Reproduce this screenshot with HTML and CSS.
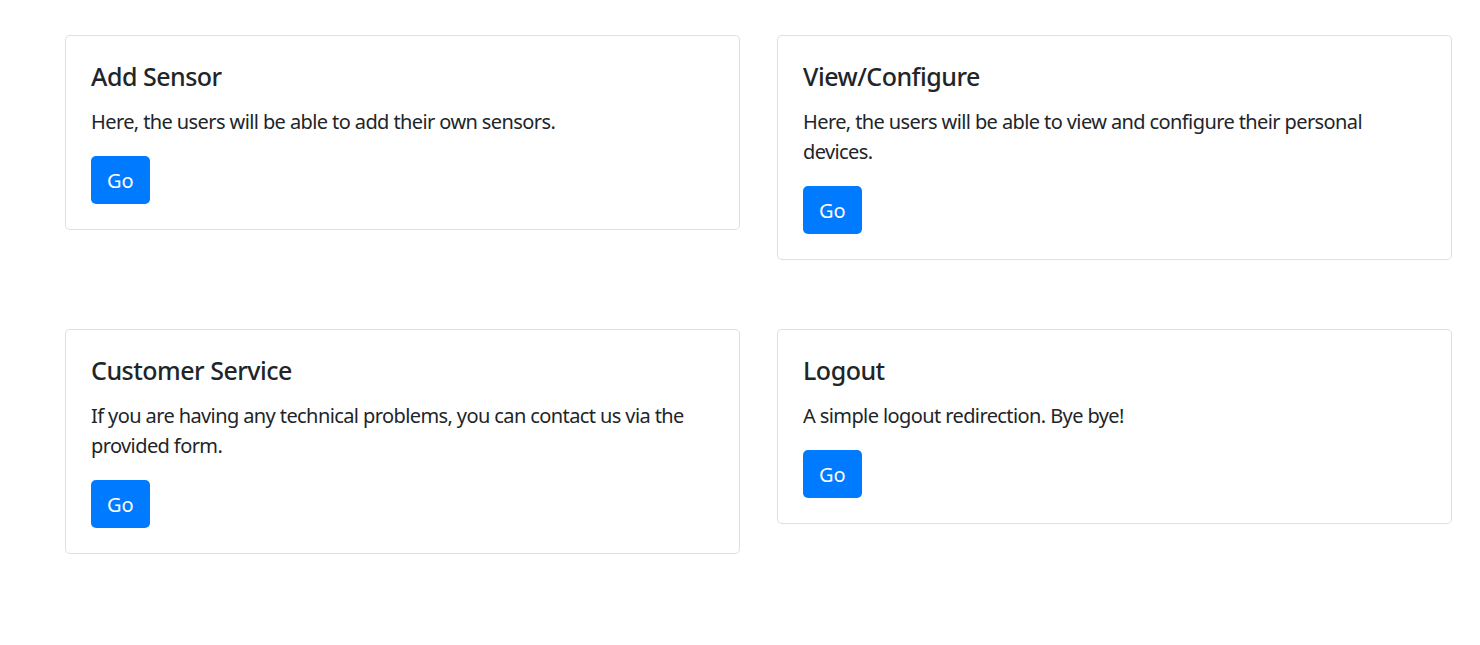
FILE: index.html
```html
<!DOCTYPE html>
<html lang="en">
<head>
<meta charset="utf-8">
<title>Dashboard</title>
<link rel="stylesheet" href="styles.css">
</head>
<body>
<main class="grid">
  <section class="card">
    <h5 class="card-title">Add Sensor</h5>
    <p class="card-text">Here, the users will be able to add their own sensors.</p>
    <a class="btn" href="#">Go</a>
  </section>
  <section class="card">
    <h5 class="card-title">View/Configure</h5>
    <p class="card-text">Here, the users will be able to view and configure their personal devices.</p>
    <a class="btn" href="#">Go</a>
  </section>
  <section class="card">
    <h5 class="card-title">Customer Service</h5>
    <p class="card-text">If you are having any technical problems, you can contact us via the provided form.</p>
    <a class="btn" href="#">Go</a>
  </section>
  <section class="card">
    <h5 class="card-title">Logout</h5>
    <p class="card-text">A simple logout redirection. Bye bye!</p>
    <a class="btn" href="#">Go</a>
  </section>
</main>
</body>
</html>
```

FILE: styles.css
```css
* { box-sizing: border-box; }
html, body { margin: 0; padding: 0; background: #fff; }
body {
  font-family: "Noto Sans", "Open Sans", sans-serif;
  font-size: 20px;
  line-height: 1.5;
  color: #212529;
}
.grid {
  display: grid;
  grid-template-columns: 675px 675px;
  column-gap: 37px;
  row-gap: 69px;
  align-items: start;
  padding: 35px 0 0 65px;
}
.card {
  border: 1px solid rgba(0,0,0,.125);
  border-radius: 5px;
  padding: 25px;
  background: #fff;
}
.card-title {
  margin: 0 0 15px;
  font-size: 25px;
  line-height: 30px;
  font-weight: 500;
  letter-spacing: -0.5px;
}
.card-text {
  margin: 0 0 19px;
  padding-top: 1px;
  letter-spacing: -0.6px;
}
.btn {
  display: inline-block;
  height: 48px;
  padding: 10px 16px 6px;
  font-size: 20px;
  line-height: 30px;
  color: #fff;
  background: #007bff;
  border-radius: 5px;
  text-decoration: none;
}
```
